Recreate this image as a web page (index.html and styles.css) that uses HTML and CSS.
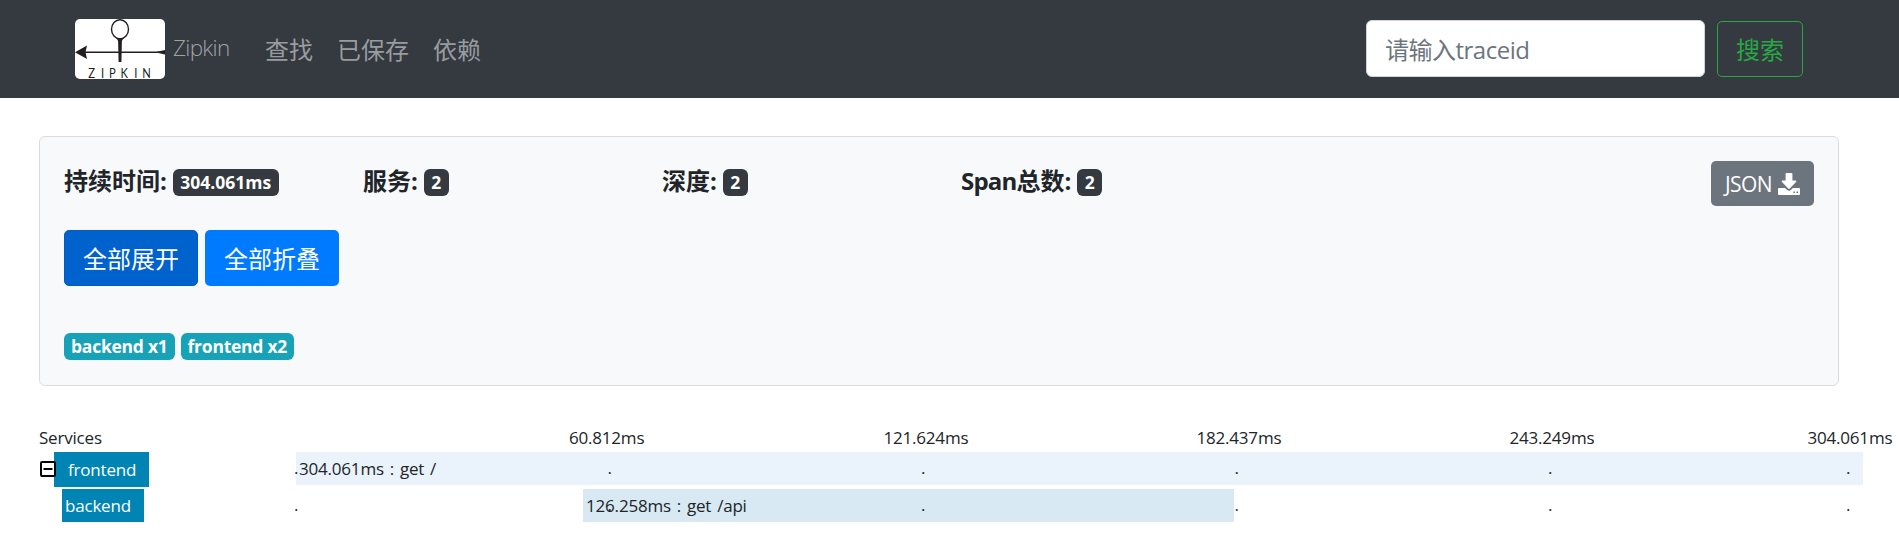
FILE: index.html
```html
<!DOCTYPE html>
<html lang="zh-CN">
<head>
<meta charset="utf-8">
<title>Zipkin</title>
<link rel="stylesheet" href="styles.css">
</head>
<body>
<nav class="navbar">
  <svg class="logo" width="90" height="60" viewBox="0 0 90 60">
    <rect width="90" height="60" rx="5" fill="#fff"/>
    <g fill="none" stroke="#231f20">
      <ellipse cx="45" cy="10.3" rx="8.5" ry="9.6" stroke-width="1.4"/>
      <path d="M8 33.3H90" stroke-width="1.4"/>
    </g>
    <path fill="#231f20" d="M41.5 19h7l-1.600 3-.5 21h-2.800l-.5-21zM0 33.300L12 26.500l-1.500 6.800L12 40zM80 33.300l10-2.300v4.600z"/>
    <text class="logo-text" transform="scale(.8 1)" x="16.500 32.500 42.500 57 74.200 84" y="59">ZIPKIN</text>
  </svg>
  <span class="brand">Zipkin</span>
  <div class="links"><a>查找</a><a>已保存</a><a>依赖</a></div>
  <input class="trace-input" type="text" placeholder="请输入traceid">
  <button class="btn search">搜索</button>
</nav>
<section class="card">
  <div class="summary">
    <div class="stat stat-time">持续时间:<span class="badge">304.061ms</span></div>
    <div class="stat">服务:<span class="badge">2</span></div>
    <div class="stat">深度:<span class="badge">2</span></div>
    <div class="stat stat-span"><span class="latin">Span</span>总数:<span class="badge">2</span></div>
    <button class="btn json"><span>JSON</span>
      <svg width="22" height="22" viewBox="0 0 22 22"><path fill="#fff" d="M8.6 0h4.8q1 0 1 1v6.500h3.100q1.400.2.5 1.500L11.800 15.500q-.8.8-1.600 0L4 9q-.9-1.300.5-1.500h3.100V1q0-1 1-1zM1 15h6l2.200 2.100q1.800 1.600 3.600 0L15 15h6q1 0 1 1v5q0 1-1 1H1q-1 0-1-1v-5q0-1 1-1z"/><path fill="#6c757d" d="M15.500 18.500h1.500v1.500h-1.500zM18.500 18.500h1.500v1.500h-1.500z"/></svg>
    </button>
  </div>
  <div class="actions"><button class="btn primary active">全部展开</button><button class="btn primary">全部折叠</button></div>
  <div class="services"><span class="badge info back">backend x1</span><span class="badge info">frontend x2</span></div>
</section>
<main class="timeline">
  <div class="row head">
    <div class="name"><span class="title">Services</span></div>
    <div class="labels"><span>60.812ms</span><span>121.624ms</span><span>182.437ms</span><span>243.249ms</span><span>304.061ms</span></div>
  </div>
  <div class="row">
    <div class="name">
      <svg class="toggle" width="16" height="16" viewBox="0 0 16 16"><rect x="1" y="1" width="14" height="14" rx="1" fill="none" stroke="#000" stroke-width="2"/><path d="M3.500 8h9" stroke="#000" stroke-width="2"/></svg>
      <span class="service parent">frontend</span>
    </div>
    <div class="track">
      <div class="bar" style="width:100%"><span>304.061ms : get /</span></div>
      <div class="ticks"><i>.</i><i>.</i><i>.</i><i>.</i><i>.</i><i>.</i></div>
    </div>
  </div>
  <div class="row child">
    <div class="name"><span class="service leaf">backend</span></div>
    <div class="track">
      <div class="bar" style="margin-left:18.32%;width:41.540%"><span>126.258ms : get /api</span></div>
      <div class="ticks"><i>.</i><i>.</i><i>.</i><i>.</i><i>.</i><i>.</i></div>
    </div>
  </div>
</main>
</body>
</html>
```
FILE: styles.css
```css
* { box-sizing: border-box; }
body {
  margin: 0;
  background: #fff;
  color: #212529;
  font-family: "Open Sans", "Noto Sans CJK SC", sans-serif;
  overflow: hidden;
}
.navbar {
  display: flex;
  align-items: center;
  height: 98px;
  padding: 0 96px 0 75px;
  background: #343a40;
}
.logo { flex: none; }
.logo-text { font: 14px Lato, sans-serif; fill: #231f20; }
.brand {
  width: 92px;
  padding: 0 0 3px 8px;
  color: #a0a3a6;
  font-size: 22.500px;
  font-weight: 300;
  line-height: 30px;
  letter-spacing: -.7px;
}
.links {
  display: flex;
  flex: 1;
  gap: 24px;
  padding: 2px 0 0 8px;
  color: #999c9f;
  font-size: 24px;
  line-height: 36px;
}
.trace-input {
  width: 339px;
  height: 57px;
  margin: 0 12px 1px 0;
  padding: 2px 18px 0;
  border: 1px solid #ced4da;
  border-radius: 6px;
  background: #fff;
  font-family: inherit;
  font-size: 24px;
}
.trace-input::placeholder { color: #6c757d; opacity: 1; letter-spacing: -.5px; }
.btn {
  padding: 0;
  border: 1px solid transparent;
  border-radius: 5px;
  font-family: inherit;
  font-size: 24px;
  line-height: 36px;
  text-align: center;
}
.search { width: 81px; width: 86px; height: 56px; padding-top: 2px; border-color: #28a745; background: none; color: #28a745; }
.card {
  height: 250px;
  margin: 38px 60px 0 39px;
  padding: 24px 24px 0 24px;
  border: 1px solid #d9dcdf;
  border-radius: 6px;
  background: #f8f9fb;
}
.summary { display: flex; height: 69px; }
.stat {
  display: flex;
  align-items: center;
  width: 299px;
  height: 40px;
  padding-bottom: 1px;
  font-size: 24px;
  font-weight: 700;
  line-height: 36px;
}
.latin { letter-spacing: -.8px; }
.badge {
  height: 27px;
  margin: 3px 0 0 6px;
  padding: 0 7.500px;
  border-radius: 6px;
  background: #343a40;
  color: #fff;
  font-size: 17.500px;
  font-weight: 700;
  line-height: 27px;
  letter-spacing: 0;
}
.json {
  display: flex;
  align-items: center;
  justify-content: center;
  gap: 6px;
  width: 103px;
  height: 45px;
  margin-left: auto;
  background: #6c757d;
  color: #fff;
  font-size: 21px;
  letter-spacing: -.6px;
}
.actions { display: flex; gap: 7px; }
.primary { width: 134px; height: 56px; padding-top: 2px; background: #007bff; color: #fff; }
.active { background: #0062cc; border-color: #005cbf; }
.services { display: flex; gap: 6px; margin-top: 47px; }
.info { margin: 0; padding: 0 7px; background: #17a2b8; letter-spacing: -.25px; }
.timeline {
  padding: 40px 0 0 39px;
  font-size: 17px;
  line-height: 24px;
  letter-spacing: -.2px;
}
.row { display: flex; height: 37px; }
.head { height: 26px; }
.name { display: flex; flex: none; width: 257px; }
.labels {
  display: grid;
  grid-template-columns: 314.500px 313px 313px 298px 86px;
  padding-left: 273px;
}
.toggle { z-index: 1; margin: 9px -2px 0 1px; }
.service { background: #0084b4; color: #fff; line-height: 33px; }
.parent { width: 95px; height: 35px; padding-left: 14px; line-height: 36px; }
.leaf { width: 82px; height: 33px; margin-left: 23px; padding-left: 3px; }
.track { position: relative; width: 1567px; height: 33px; }
.bar { height: 33px; background: #eaf3fb; line-height: 34px; padding-left: 3px; white-space: nowrap; word-spacing: 1.700px; }
.child .bar { background: #d8e9f3; }
.ticks {
  position: absolute;
  inset: 0;
  display: grid;
  grid-template-columns: repeat(4, 313.500px) 298px 4px;
  line-height: 31px;
}
.ticks i { margin-left: -2px; font-style: normal; }
```
